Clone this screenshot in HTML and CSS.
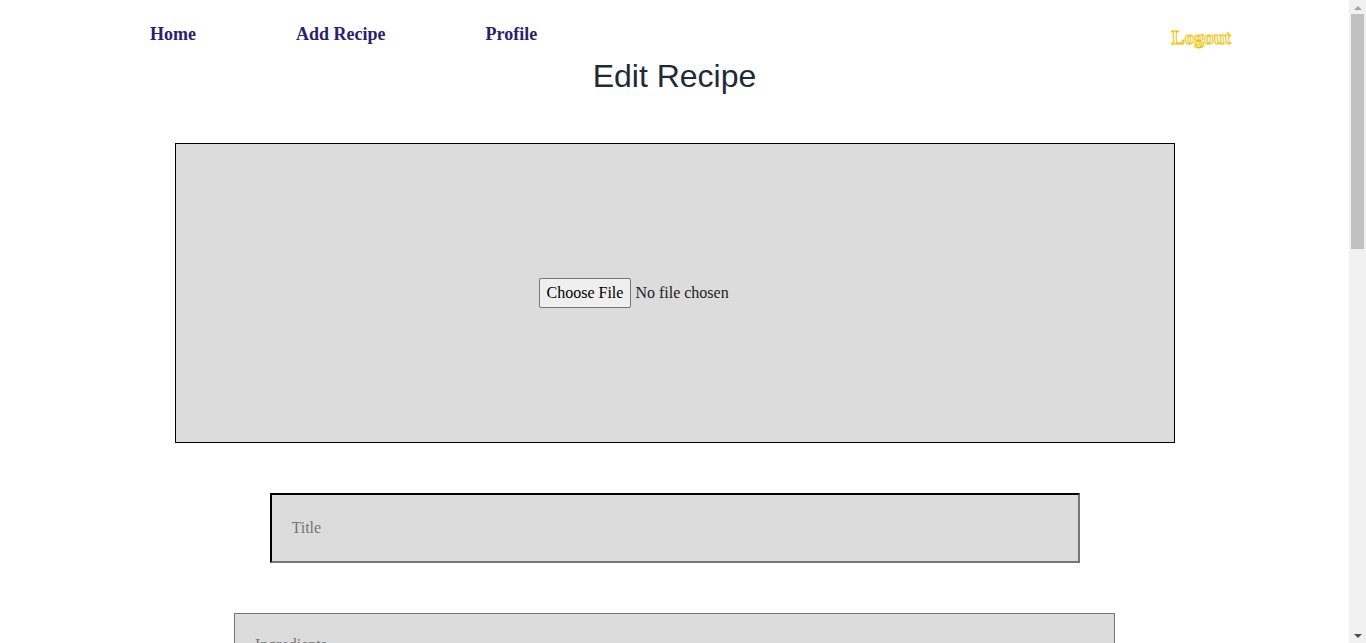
FILE: index.html
```html
<!DOCTYPE html>
<html>
<head>
<meta charset="utf-8">
<title>Edit Recipe</title>
<link rel="stylesheet" href="styles.css">
</head>
<body>
<div class="page">
  <nav class="nav">
    <div class="nav-links">
      <a class="nav-link" href="#">Home</a>
      <a class="nav-link" href="#">Add Recipe</a>
      <a class="nav-link" href="#">Profile</a>
    </div>
    <a class="logout" href="#">Logout</a>
  </nav>
  <h1 class="title">Edit Recipe</h1>
  <form class="form">
    <div class="image-box">
      <input class="file" type="file">
    </div>
    <input class="field-title" type="text" placeholder="Title">
    <textarea class="field-ingredients" placeholder="Ingredients"></textarea>
    <textarea class="field-steps" placeholder="Steps"></textarea>
  </form>
</div>
<div class="scrollbar">
  <div class="sb-arrow sb-up"></div>
  <div class="sb-thumb"></div>
  <div class="sb-arrow sb-down"></div>
</div>
</body>
</html>
```
FILE: styles.css
```css
html, body {
  margin: 0;
  padding: 0;
  background: #ffffff;
  font-family: "Liberation Serif", "Times New Roman", serif;
}
.page {
  width: 1349px;
}
.nav {
  display: flex;
  justify-content: space-between;
  align-items: flex-start;
  padding: 24px 118px 0 150px;
  height: 34px;
}
.nav-links {
  display: flex;
  gap: 100px;
}
.nav-link {
  font-size: 18px;
  font-weight: bold;
  color: #2b1f6e;
  text-decoration: none;
}
.logout {
  margin-top: 3px;
  font-size: 19.5px;
  font-weight: bold;
  color: #fffdf0;
  -webkit-text-stroke: 1px #f2c200;
  text-decoration: none;
}
.title {
  margin: 0;
  text-align: center;
  font-family: "Liberation Sans", Arial, sans-serif;
  font-weight: normal;
  font-size: 32px;
  line-height: 37px;
  color: #1e2a38;
}
.form {
  display: flex;
  flex-direction: column;
  align-items: center;
  gap: 50px;
  padding-top: 48px;
  padding-bottom: 40px;
}
.image-box {
  box-sizing: border-box;
  width: 1000px;
  height: 300px;
  border: 1px solid #000000;
  background: #dcdcdc;
  display: flex;
  align-items: center;
  justify-content: center;
}
.file {
  font-family: "Liberation Serif", "Times New Roman", serif;
  font-size: 16px;
  color: #222;
}
.file::file-selector-button {
  font-family: "Liberation Serif", "Times New Roman", serif;
  font-size: 16px;
  padding: 5px 7px 5px;
  margin-right: 4px;
  background: #efefef;
  border: 1px solid #767676;
  border-radius: 2px;
  color: #000;
}
.field-title {
  box-sizing: border-box;
  width: 810px;
  height: 70px;
  padding: 0 20px;
  border: 2px inset #767676;
  border-top-color: #222;
  border-left-color: #222;
  background: #dcdcdc;
  font-family: "Liberation Serif", "Times New Roman", serif;
  font-size: 16px;
}
.field-title::placeholder,
.field-ingredients::placeholder,
.field-steps::placeholder {
  color: #757575;
}
.field-ingredients,
.field-steps {
  box-sizing: border-box;
  width: 881px;
  height: 200px;
  padding: 22px 20px 20px;
  border: 1px solid #767676;
  background: #dcdcdc;
  font-family: "Liberation Serif", "Times New Roman", serif;
  font-size: 16px;
  resize: vertical;
}
.scrollbar {
  position: fixed;
  top: 0;
  right: 0;
  width: 17px;
  height: 100vh;
  background: #f1f1f1;
  display: flex;
  flex-direction: column;
  align-items: center;
}
.sb-arrow {
  width: 0;
  height: 0;
  border-left: 4px solid transparent;
  border-right: 4px solid transparent;
}
.sb-up {
  margin-top: 6px;
  border-bottom: 4px solid #a3a3a3;
}
.sb-down {
  margin-top: auto;
  margin-bottom: 5px;
  border-top: 4px solid #505050;
}
.sb-thumb {
  margin-top: 4px;
  width: 13px;
  height: 235px;
  background: #c1c1c1;
}
```
